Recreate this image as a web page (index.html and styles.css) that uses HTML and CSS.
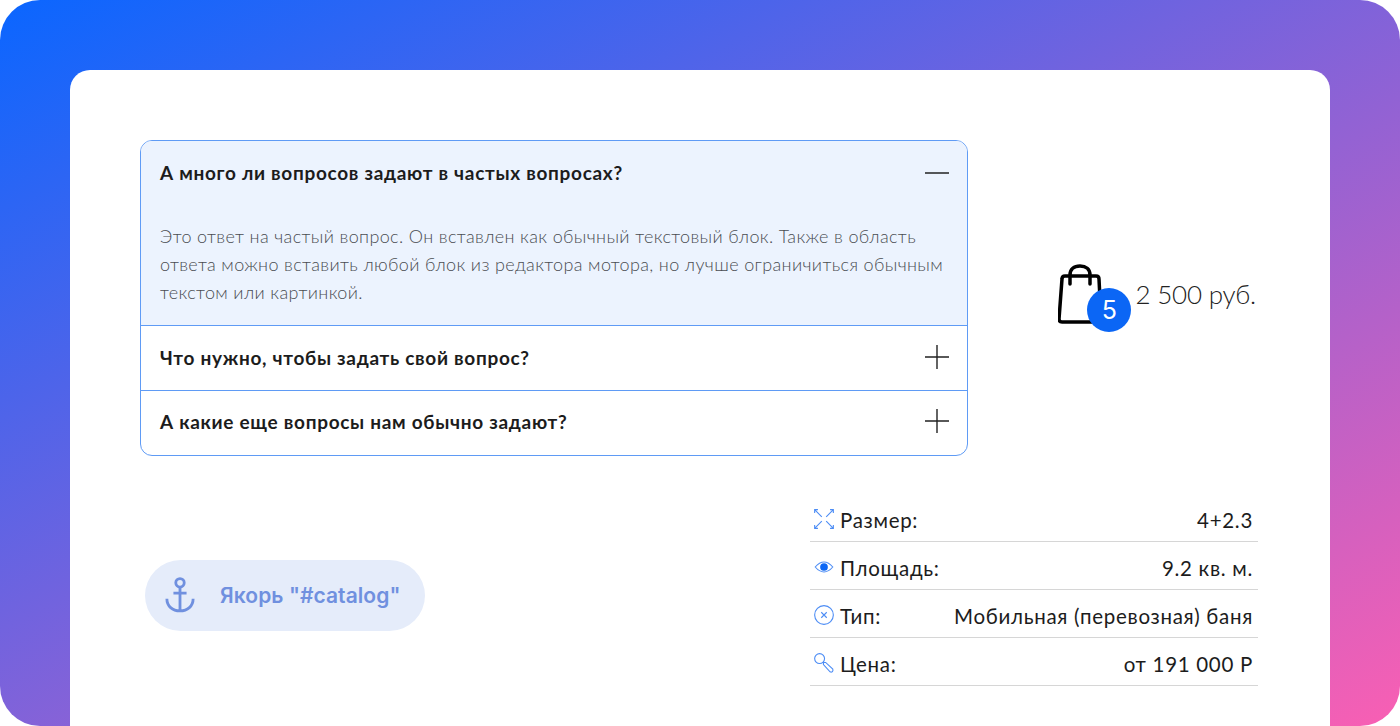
FILE: index.html
```html
<!DOCTYPE html>
<html lang="ru">
<head>
<meta charset="utf-8">
<title>Blocks</title>
<link rel="stylesheet" href="styles.css">
</head>
<body>
<div class="frame">
  <main class="card">
    <div class="top">
      <section class="faq">
        <div class="faq-item open">
          <div class="faq-head">
            <span class="faq-q">А много ли вопросов задают в частых вопросах?</span>
            <svg class="faq-icon" viewBox="0 0 24 24"><path d="M0 12H24"/></svg>
          </div>
          <p class="faq-a">Это ответ на частый вопрос. Он вставлен как обычный текстовый блок. Также в область<br>ответа можно вставить любой блок из редактора мотора, но лучше ограничиться обычным<br>текстом или картинкой.</p>
        </div>
        <div class="faq-item">
          <div class="faq-head">
            <span class="faq-q">Что нужно, чтобы задать свой вопрос?</span>
            <svg class="faq-icon" viewBox="0 0 24 24"><path d="M0 12H24M12 0V24"/></svg>
          </div>
        </div>
        <div class="faq-item">
          <div class="faq-head">
            <span class="faq-q">А какие еще вопросы нам обычно задают?</span>
            <svg class="faq-icon" viewBox="0 0 24 24"><path d="M0 12H24M12 0V24"/></svg>
          </div>
        </div>
      </section>
      <div class="cart">
        <div class="bag">
          <svg class="bag-icon" viewBox="0 0 44 60"><path d="M7 12H38Q41 12 41 15L43 55Q43 58 40 58H4Q1 58 1 55L4 15Q4 12 7 12ZM12 20V11C12 5 16 2 22 2S32 5 32 11V20"/></svg>
          <span class="bag-count">5</span>
        </div>
        <span class="cart-sum">2 500 руб.</span>
      </div>
    </div>
    <div class="bottom">
      <a class="anchor" href="#catalog">
        <svg class="anchor-icon" viewBox="0 0 32 38"><circle cx="16" cy="6" r="4.500"/><path d="M16 10.500V36M9 17H23M2 23C2 31 8 36 16 36S30 31 30 23"/></svg>
        <span>Якорь "#catalog"</span>
      </a>
      <div class="specs">
        <div class="spec">
          <svg class="spec-icon" viewBox="0 0 20 20"><path d="M1.500 1.500L8 8M18.500 1.500L12 8M1.500 18.500L8 12M18.500 18.500L12 12M1.500 4.500V1.500H4.500M15.500 1.500H18.500V4.500M1.500 15.500V18.500H4.500M15.500 18.500H18.500V15.500"/></svg>
          <span class="spec-label">Размер:</span>
          <span class="spec-value">4+2.3</span>
        </div>
        <div class="spec">
          <svg class="spec-icon" viewBox="0 0 20 20"><path d="M2 10C5 6.500 7.500 5.500 10 5.500S15 6.500 18 10C15 13.500 12.500 14.500 10 14.500S5 13.500 2 10Z"/><circle class="spec-fill" cx="10" cy="10" r="3.500"/></svg>
          <span class="spec-label">Площадь:</span>
          <span class="spec-value">9.2 кв. м.</span>
        </div>
        <div class="spec">
          <svg class="spec-icon" viewBox="0 0 20 20"><circle cx="10" cy="10" r="8.500"/><path d="M7.500 7.500L12.500 12.500M12.500 7.500L7.500 12.500"/></svg>
          <span class="spec-label">Тип:</span>
          <span class="spec-value">Мобильная (перевозная) баня</span>
        </div>
        <div class="spec">
          <svg class="spec-icon" viewBox="0 0 20 20"><circle cx="6" cy="6" r="4.500"/><path d="M9.500 9.500L11.500 9.500L18 15.500Q18.500 17 17.500 18Q16.500 18.500 15.500 18L9.500 11.500Z"/></svg>
          <span class="spec-label">Цена:</span>
          <span class="spec-value">от 191 000 Р</span>
        </div>
      </div>
    </div>
  </main>
</div>
</body>
</html>
```
FILE: styles.css
```css
* { box-sizing: border-box; }
html, body { margin: 0; height: 100%; background: #fff; overflow: hidden; }
body { font-family: "Lato", "Noto Sans", sans-serif; color: #1c1c1c; }

.frame {
  height: 726px;
  padding: 70px 70px 0;
  border-radius: 40px;
  background: linear-gradient(to bottom right, #0a66ff, #f95fb3);
  display: flex;
}
.card {
  flex: 1;
  background: #fff;
  border-radius: 20px 20px 0 0;
  padding: 70px 72px 0 70px;
}

.top { display: flex; align-items: center; justify-content: space-between; }

.faq {
  width: 828px;
  border: 1px solid #5f9bf5;
  border-radius: 12px;
  overflow: hidden;
}
.faq-item + .faq-item { border-top: 1px solid #5f9bf5; }
.faq-item.open { background: #ecf3fe; padding-bottom: 19px; }
.faq-head {
  height: 64px;
  padding: 0 18px 2px 19px;
  display: flex;
  align-items: center;
  justify-content: space-between;
}
.faq-item:last-child .faq-head { padding-bottom: 4px; }
.faq-item.open .faq-head { height: 63px; padding-bottom: 0; }
.faq-q { font-size: 19px; font-weight: 700; letter-spacing: .7px; }
.faq-icon { width: 24px; height: 24px; fill: none; stroke: #222; stroke-width: 1.400; }
.faq-a {
  margin: 18px 0 0;
  padding: 0 19px;
  font-size: 18px;
  line-height: 28px;
  font-weight: 300;
  letter-spacing: .36px;
  color: #4a4d52;
  white-space: nowrap;
}

.cart { display: flex; align-items: center; gap: 4px; }
.bag { position: relative; width: 73px; height: 68px; }
.bag-icon { width: 44px; height: 60px; fill: none; stroke: #000; stroke-width: 3.500; stroke-linejoin: round; stroke-linecap: round; display: block; }
.bag-count {
  position: absolute;
  right: 0;
  bottom: 0;
  width: 44px;
  height: 44px;
  border-radius: 50%;
  background: #0b66f5;
  color: #fff;
  font: 400 25px/44px "Inter", sans-serif;
  text-align: center;
}
.cart-sum { font-size: 26px; font-weight: 300; color: #222; letter-spacing: -.2px; padding-bottom: 8px; margin-right: 2px; }

.bottom { display: flex; justify-content: space-between; margin-top: 38px; }
.anchor {
  margin: 66px 0 0 5px;
  width: 280px;
  height: 71px;
  border-radius: 36px;
  background: #e5ecfa;
  color: #7090df;
  display: flex;
  align-items: center;
  gap: 25px;
  padding-left: 20px;
  font: 600 21px "Inter", sans-serif;
  letter-spacing: .06px;
  text-decoration: none;
}
.anchor-icon { width: 30px; height: 38px; fill: none; stroke: #7090df; stroke-width: 3; flex: none; margin-top: -1px; }

.specs { width: 448px; }
.spec {
  height: 48px;
  display: flex;
  align-items: center;
  border-bottom: 1.500px solid #d6d6d6;
  padding: 4px 5px 0 3px;
  font-size: 20.500px;
}
.spec-icon { width: 22px; height: 22px; fill: none; stroke: #4d8df5; stroke-width: 1; flex: none; margin: -2px 5px 0 0; }
.spec-fill { fill: #0b66f5; stroke: none; }
.spec-label { letter-spacing: .7px; }
.spec-value { margin-left: auto; letter-spacing: .7px; }
```
